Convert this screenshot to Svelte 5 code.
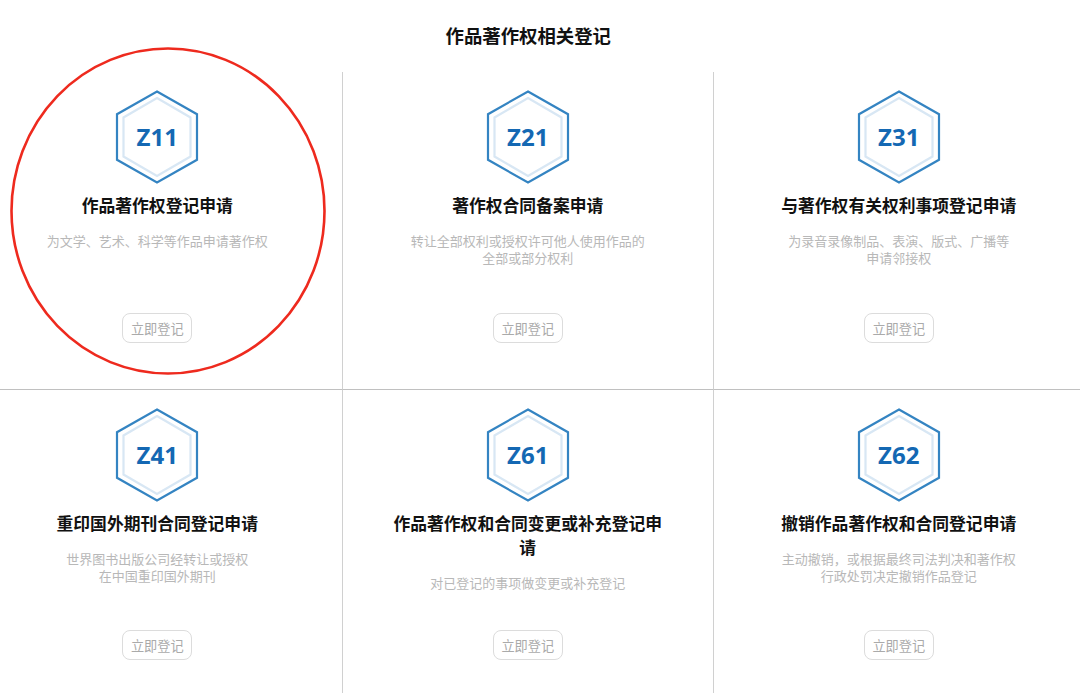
<script>
  const items = [
    { code: 'Z11', title: '作品著作权登记申请', desc: ['为文学、艺术、科学等作品申请著作权'] },
    { code: 'Z21', title: '著作权合同备案申请', desc: ['转让全部权利或授权许可他人使用作品的', '全部或部分权利'] },
    { code: 'Z31', title: '与著作权有关权利事项登记申请', desc: ['为录音录像制品、表演、版式、广播等', '申请邻接权'] },
    { code: 'Z41', title: '重印国外期刊合同登记申请', desc: ['世界图书出版公司经转让或授权', '在中国重印国外期刊'] },
    { code: 'Z61', title: '作品著作权和合同变更或补充登记申请', desc: ['对已登记的事项做变更或补充登记'] },
    { code: 'Z62', title: '撤销作品著作权和合同登记申请', desc: ['主动撤销，或根据最终司法判决和著作权', '行政处罚决定撤销作品登记'] }
  ];
</script>

<div class="page">
  <h2 class="heading">作品著作权相关登记</h2>

  <div class="grid">
    {#each items as item}
      <div class="card">
        <div class="badge">
          <svg width="84" height="94" viewBox="0 0 84 94" aria-hidden="true">
            <polygon points="42,1.5 82,24.2 82,69.8 42,92.5 2,69.8 2,24.2" fill="#fff" stroke="#3484c2" stroke-width="2.2" />
            <polygon points="42,8 75.5,27.5 75.5,66.5 42,86 8.5,66.5 8.5,27.5" fill="#fff" stroke="#d8e7f4" stroke-width="2.2" />
          </svg>
          <span class="code">{item.code}</span>
        </div>
        <h3 class="title">{item.title}</h3>
        <p class="desc">
          {#each item.desc as line}
            <span>{line}</span>
          {/each}
        </p>
        <button class="btn">立即登记</button>
      </div>
    {/each}
  </div>

  <svg class="circle" width="320" height="332" viewBox="0 0 320 332" aria-hidden="true">
    <ellipse cx="159" cy="165" rx="156.5" ry="162.5" fill="none" stroke="#ee2a1e" stroke-width="2.6" />
  </svg>
</div>

<style>
  :global(body) {
    margin: 0;
    background: #fff;
  }

  .page {
    position: relative;
    width: 1080px;
    height: 693px;
    overflow: hidden;
    font-family: "Noto Sans CJK SC", "Liberation Sans", sans-serif;
  }

  .heading {
    margin: 0 0 0 -27.5px;
    width: 1111.5px;
    height: 72px;
    box-sizing: border-box;
    padding-top: 22px;
    font-size: 18.4px;
    line-height: 26px;
    font-weight: 700;
    color: #111;
    text-align: center;
  }

  .grid {
    display: grid;
    grid-template-columns: repeat(3, 370.5px);
    grid-template-rows: 317px 317px;
    width: 1111.5px;
    margin-left: -27.5px;
  }

  .card {
    display: flex;
    flex-direction: column;
    align-items: center;
    box-sizing: border-box;
    padding: 18px 24px 46px;
    border-right: 1px solid #d0d0d0;
    text-align: center;
  }

  .card:nth-child(3n) {
    border-right: none;
  }

  .card:nth-child(n + 4) {
    border-top: 1px solid #c0c0c0;
  }

  .badge {
    position: relative;
    width: 84px;
    height: 94px;
    flex: none;
  }

  .badge svg {
    display: block;
  }

  .code {
    position: absolute;
    inset: 0 0 2px;
    display: flex;
    align-items: center;
    justify-content: center;
    font-family: "Open Sans", "Liberation Sans", sans-serif;
    font-size: 24px;
    font-weight: 700;
    color: #1468b3;
  }

  .title {
    margin: 9px 0 0;
    font-size: 16.8px;
    line-height: 24px;
    font-weight: 700;
    color: #111;
    max-width: 280px;
  }

  .desc {
    margin: 15px 0 0;
    font-size: 13px;
    line-height: 17px;
    color: #b8b8b8;
  }

  .desc span {
    display: block;
    white-space: nowrap;
  }

  .btn {
    flex: none;
    width: 70px;
    height: 30px;
    padding: 0;
    margin-top: auto;
    box-sizing: border-box;
    background: #fff;
    border: 1px solid #dcdcdc;
    border-radius: 8px;
    font-family: inherit;
    font-size: 13.2px;
    color: #aaa;
  }

  .circle {
    position: absolute;
    left: 9px;
    top: 46px;
    pointer-events: none;
  }
</style>
